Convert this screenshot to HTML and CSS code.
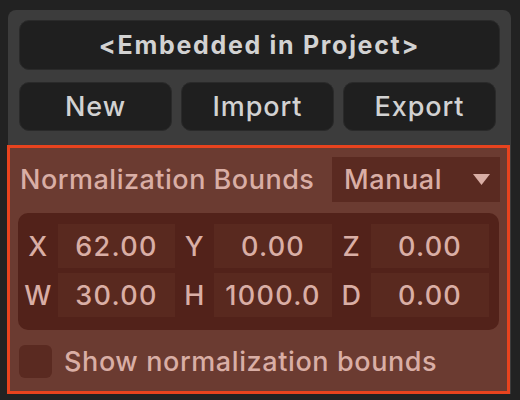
FILE: index.html
```html
<!DOCTYPE html>
<html lang="en">
<head>
    <meta charset="UTF-8">
    <meta name="viewport" content="width=device-width, initial-scale=1.0">
    <title>Normalization Bounds</title>
    <link rel="stylesheet" href="styles.css">
</head>
<body>
    <div class="panel">
        <button class="btn btn-title">&lt;Embedded in Project&gt;</button>
        <div class="btn-row">
            <button class="btn">New</button>
            <button class="btn">Import</button>
            <button class="btn">Export</button>
        </div>
        <div class="section">
            <div class="header-row">
                <span class="header-label">Normalization Bounds</span>
                <div class="dropdown">
                    <span>Manual</span>
                    <svg class="caret" width="17" height="11" viewBox="0 0 17 11"><path d="M0 0H17L8.5 11Z" fill="currentColor"/></svg>
                </div>
            </div>
            <div class="bounds">
                <span class="axis">X</span><span class="field">62.00</span>
                <span class="axis">Y</span><span class="field">0.00</span>
                <span class="axis">Z</span><span class="field">0.00</span>
                <span class="axis">W</span><span class="field">30.00</span>
                <span class="axis">H</span><span class="field">1000.0</span>
                <span class="axis">D</span><span class="field">0.00</span>
            </div>
            <label class="check-row">
                <span class="checkbox"></span>
                <span>Show normalization bounds</span>
            </label>
        </div>
    </div>
</body>
</html>
```

FILE: styles.css
```css
body {
    margin: 0;
    background-color: #222222;
    font-family: Inter, "Noto Sans", sans-serif;
    font-weight: 500;
    letter-spacing: 0.6px;
    height: 400px;
    overflow: hidden;
}
.panel {
    margin: 10px 9px 0 8px;
    padding: 10px 11px 0;
    background-color: #3c3c3c;
    border-radius: 8px 8px 0 0;
}
.btn {
    display: block;
    background-color: #1f1f1f;
    border: 1px solid #2a2a2a;
    border-radius: 10px;
    color: #d2d2d2;
    font-family: inherit;
    font-size: 27px;
    font-weight: 500;
    letter-spacing: 0.9px;
    padding: 0;
    cursor: pointer;
}
.btn-title {
    width: 100%;
    height: 50px;
    font-size: 25px;
    font-weight: 700;
    letter-spacing: 1.7px;
}
.btn-row {
    display: flex;
    gap: 9px;
    margin-top: 12px;
}
.btn-row .btn {
    width: 153px;
    height: 49px;
}
.section {
    margin: 14px -10px 0 -12px;
    border: 3px solid #e8431e;
    background-color: #6b3b31;
    padding: 9px 7px 13px 8px;
    color: #d9aea5;
}
.header-row {
    display: flex;
    justify-content: space-between;
    align-items: center;
    height: 45px;
}
.header-label {
    font-size: 27px;
    letter-spacing: 0.5px;
    padding-left: 2px;
}
.dropdown {
    display: flex;
    align-items: center;
    justify-content: space-between;
    width: 168px;
    height: 45px;
    box-sizing: border-box;
    padding: 0 10px 0 12px;
    background-color: #5a2a21;
    font-size: 27px;
}
.bounds {
    display: grid;
    grid-template-columns: 40px 117px 39px 118px 39px 118px;
    grid-auto-rows: 44px;
    row-gap: 5px;
    margin: 11px 1px 0 0;
    padding: 11px 10px 13px 0;
    background-color: #52221a;
    border-radius: 10px;
}
.axis {
    display: flex;
    align-items: center;
    justify-content: center;
    font-size: 27px;
}
.field {
    display: flex;
    align-items: center;
    justify-content: center;
    background-color: #59291f;
    font-size: 27px;
    letter-spacing: 1.3px;
}
.check-row {
    display: flex;
    align-items: center;
    gap: 12px;
    margin: 15px 0 0 1px;
    font-size: 27px;
}
.checkbox {
    width: 33px;
    height: 33px;
    border-radius: 6px;
    background-color: #5a2a21;
}
```
